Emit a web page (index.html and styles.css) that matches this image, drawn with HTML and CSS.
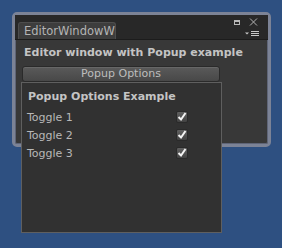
FILE: index.html
```html
<!DOCTYPE html>
<html lang="en">
<head>
    <meta charset="UTF-8">
    <title>EditorWindowWithPopup</title>
    <link rel="stylesheet" href="styles.css">
</head>
<body>

    <div class="desktop">
        <div class="window">
            <div class="titlebar">
                <div class="tab">EditorWindowW</div>
                <div class="controls">
                    <div class="controls-top">
                        <svg width="6" height="5" viewBox="0 0 6 5"><rect x="0.5" y="0.5" width="5" height="4" fill="none" stroke="#b8b8b8" stroke-width="1"/><rect x="0" y="0" width="6" height="2" fill="#b8b8b8"/></svg>
                        <svg width="9" height="8" viewBox="0 0 9 8"><path d="M1 0.5 L8 7.5 M8 0.5 L1 7.5" stroke="#b0b0b0" stroke-width="1"/></svg>
                    </div>
                    <svg class="menu-icon" width="15" height="6" viewBox="0 0 15 6"><path d="M0 1.5 H4 L2 3.5 Z" fill="#c8c8c8"/><path d="M6 0.5 H14 M6 2.5 H14 M6 4.5 H14" stroke="#c8c8c8" stroke-width="1"/></svg>
                </div>
            </div>
            <div class="content">
                <div class="heading">Editor window with Popup example</div>
                <button class="popup-btn">Popup Options</button>
            </div>
        </div>

        <!-- popup opened from the button -->
        <div class="popup">
            <div class="popup-title">Popup Options Example</div>
            <div class="toggle-row"><span class="toggle-label">Toggle 1</span><span class="checkbox"><svg width="10" height="10" viewBox="0 0 10 10"><path d="M1.5 5 L4 7.5 L8.5 1" fill="none" stroke="#f4f4f4" stroke-width="2"/></svg></span></div>
            <div class="toggle-row"><span class="toggle-label">Toggle 2</span><span class="checkbox"><svg width="10" height="10" viewBox="0 0 10 10"><path d="M1.5 5 L4 7.5 L8.5 1" fill="none" stroke="#f4f4f4" stroke-width="2"/></svg></span></div>
            <div class="toggle-row"><span class="toggle-label">Toggle 3</span><span class="checkbox"><svg width="10" height="10" viewBox="0 0 10 10"><path d="M1.5 5 L4 7.5 L8.5 1" fill="none" stroke="#f4f4f4" stroke-width="2"/></svg></span></div>
        </div>
    </div>

</body>
</html>
```

FILE: styles.css
```css
/* Unity dark skin editor window */
body {
    margin: 0;
    padding: 0;
    background-color: #2e5081;
    font-family: "DejaVu Sans", sans-serif;
    font-size: 11px;
    color: #b8b8b8;
}

.desktop {
    position: relative;
    width: 282px;
    height: 248px;
}

.window {
    position: absolute;
    left: 12px;
    top: 12px;
    width: 259px;
    height: 135px;
    box-sizing: border-box;
    border: 3px solid #7c8396;
    border-radius: 5px;
    box-shadow: inset 0 0 0 1px #5f6577;
    background-color: #383838;
    display: flex;
    flex-direction: column;
}

.titlebar {
    height: 25px;
    background-color: #282828;
    border-bottom: 1px solid #1c1c1c;
    display: flex;
    justify-content: space-between;
    align-items: flex-end;
    padding-left: 3px;
    box-sizing: border-box;
}

.tab {
    width: 98px;
    height: 17px;
    box-sizing: border-box;
    background-color: #3d3d3d;
    border: 1px solid #4d4d4d;
    border-bottom: none;
    border-radius: 3px 3px 0 0;
    padding-left: 5px;
    font-size: 11.5px;
    line-height: 16px;
    color: #b4b4b4;
    white-space: nowrap;
}

.controls {
    display: flex;
    flex-direction: column;
    align-items: flex-end;
    padding-right: 8px;
    padding-bottom: 2px;
    gap: 5px;
}

.controls-top {
    display: flex;
    align-items: center;
    gap: 9px;
    margin-right: 2px;
}

.controls svg {
    display: block;
}

.content {
    flex: 1;
    padding: 6px 0 0 7px;
}

.heading {
    font-weight: bold;
    line-height: 14px;
    color: #c4c4c4;
    padding-left: 2px;
}

.popup-btn {
    display: block;
    margin-top: 6px;
    width: 198px;
    height: 16px;
    padding: 0;
    border: 1px solid #2a2a2a;
    border-radius: 3px;
    background: linear-gradient(#5a5a5a, #484848);
    box-shadow: inset 0 1px 0 #676767;
    font-family: "DejaVu Sans", sans-serif;
    font-size: 11px;
    line-height: 14px;
    color: #bdbdbd;
    text-align: center;
}

.popup {
    position: absolute;
    left: 21px;
    top: 82px;
    width: 201px;
    height: 151px;
    box-sizing: border-box;
    background-color: #313131;
    border: 1px solid #5f5f5f;
    padding: 7px 0 0 5px;
}

.popup-title {
    font-weight: bold;
    line-height: 14px;
    color: #c4c4c4;
    margin-left: 1px;
    margin-bottom: 4px;
}

.toggle-row {
    display: flex;
    align-items: center;
    height: 18px;
}

.toggle-label {
    width: 149px;
    color: #b8b8b8;
}

.checkbox {
    width: 12px;
    height: 12px;
    box-sizing: border-box;
    border-radius: 2px;
    border: 1px solid #2a2a2a;
    background: linear-gradient(#606060, #424242);
    display: flex;
    align-items: center;
    justify-content: center;
}

.checkbox svg {
    display: block;
}
```
